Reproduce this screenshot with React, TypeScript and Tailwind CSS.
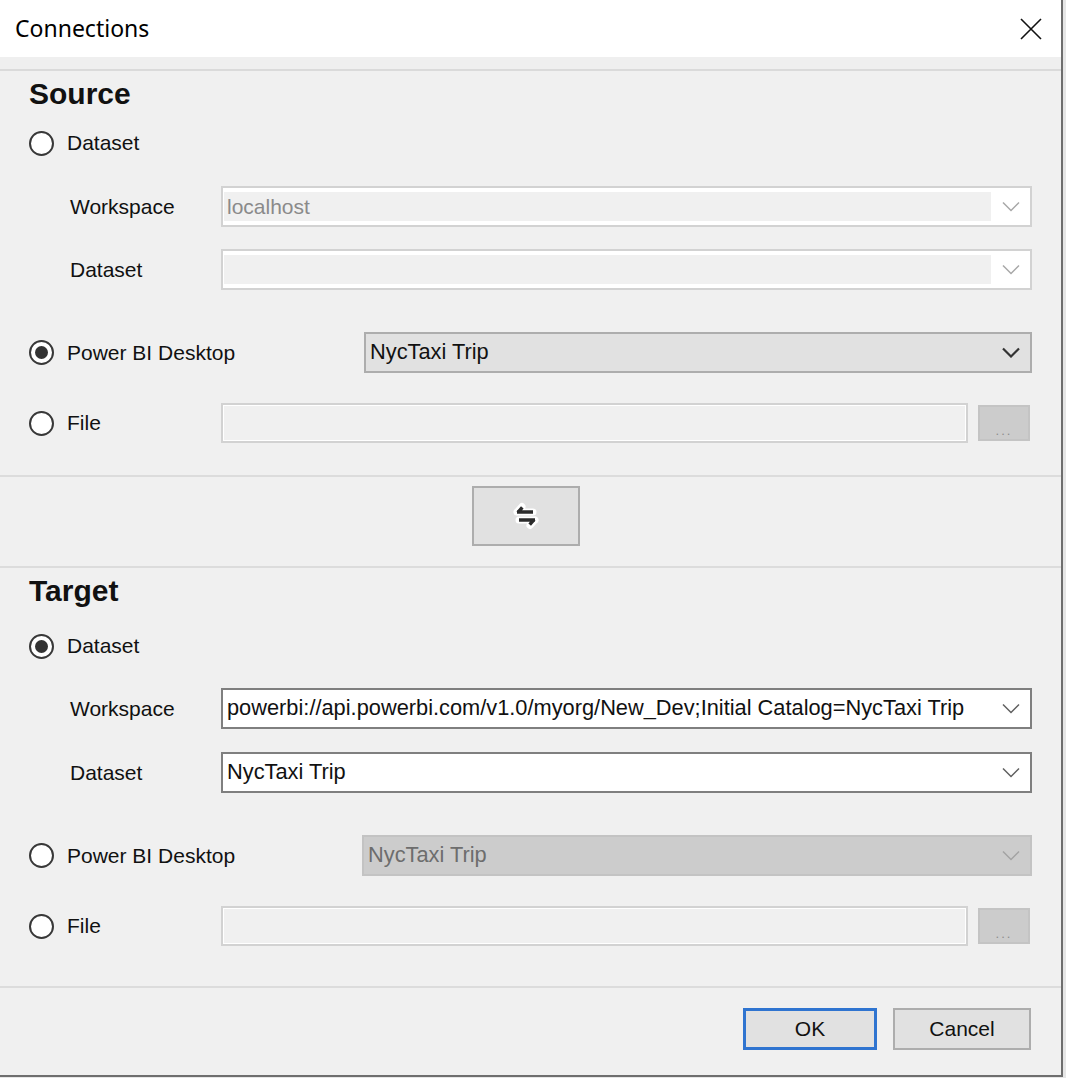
import React from "react";

const font = { fontFamily: '"Liberation Sans", Arial, sans-serif' };

const Radio = ({ checked }: { checked?: boolean }) => (
  <span className="flex h-[25px] w-[25px] shrink-0 items-center justify-center rounded-full border-2 border-[#383838] bg-white">
    {checked && <span className="h-[13px] w-[13px] rounded-full bg-[#333333]" />}
  </span>
);

const Chevron = ({ color, width = 1.5 }: { color: string; width?: number }) => (
  <svg width="18" height="11" viewBox="0 0 18 11" fill="none">
    <polyline points="1,1.5 9,9.5 17,1.5" stroke={color} strokeWidth={width} />
  </svg>
);

type ComboKind = "disabled" | "active" | "white" | "grayed";

const Combo = ({ kind, value, className }: { kind: ComboKind; value?: string; className?: string }) => {
  if (kind === "disabled") {
    return (
      <div className={`flex h-[41px] border-2 border-[#d2d2d2] bg-white py-[4px] pl-[1px] ${className ?? ""}`}>
        <div className="flex flex-1 items-center bg-[#f0f0f0] pl-[3px] text-[21px] text-[#8a8a8a]">{value}</div>
        <div className="flex w-[39px] items-center justify-center">
          <Chevron color="#a8a8a8" />
        </div>
      </div>
    );
  }
  const styles: Record<string, string> = {
    active: "border-2 border-[#adadad] bg-[#e1e1e1] text-[#111111]",
    white: "border-2 border-[#7f7f7f] bg-white text-[#111111]",
    grayed: "border-2 border-[#c3c3c3] bg-[#cccccc] text-[#6d6d6d]",
  };
  const chev: Record<string, [string, number]> = {
    active: ["#333333", 2.2],
    white: ["#606060", 1.5],
    grayed: ["#a3a3a3", 1.5],
  };
  return (
    <div className={`flex h-[41px] items-center ${styles[kind]} ${className ?? ""}`}>
      <div className="flex-1 truncate pl-[4px] text-[21.8px]">{value}</div>
      <div className="flex w-[39px] items-center justify-center">
        <Chevron color={chev[kind][0]} width={chev[kind][1]} />
      </div>
    </div>
  );
};

const FileRow = () => (
  <div className="flex items-center">
    <div className="flex w-[192px] items-center gap-[13px]">
      <Radio />
      <span className="text-[21px]">File</span>
    </div>
    <div className="h-[40px] w-[747px] border-2 border-[#d2d2d2] bg-[#f0f0f0] shadow-[inset_0_0_0_1px_#ffffff]" />
    <div className="ml-[10px] flex h-[36px] w-[52px] items-end justify-center border-2 border-[#c4c4c4] bg-[#cccccc] pb-[2px] text-[13px] leading-none tracking-[2px] text-[#8d8d8d]">
      ...
    </div>
  </div>
);

const SubRow = ({ label, children }: { label: string; children: React.ReactNode }) => (
  <div className="flex items-center">
    <span className="w-[192px] pl-[41px] text-[21px]">{label}</span>
    <div className="w-[811px]">{children}</div>
  </div>
);

export default function App() {
  return (
    <div className="h-[1078px] w-[1066px] bg-[#e6e6e6] text-[#111111]" style={font}>
      <div className="flex h-[1077px] w-[1063px] flex-col border-r-2 border-b-2 border-[#6e6e6e] bg-[#f0f0f0]">
        {/* title bar */}
        <div className="flex h-[57px] shrink-0 items-center justify-between bg-white pl-[15px] pr-[19px]">
          <span className="text-[23px] text-black" style={{ fontFamily: '"Noto Sans", sans-serif' }}>
            Connections
          </span>
          <svg width="22" height="22" viewBox="0 0 22 22">
            <path d="M1 1 L21 21 M21 1 L1 21" stroke="#111111" strokeWidth="1.6" />
          </svg>
        </div>
        <div className="h-[12px] shrink-0 bg-[#efefef]" />
        <div className="h-[2px] shrink-0 bg-[#dadada]" />

        {/* source */}
        <div className="flex flex-col pl-[29px]">
          <div className="flex h-[45px] items-center text-[30px] font-bold">Source</div>
          <div className="mt-[3px] flex h-[48px] items-center gap-[13px]">
            <Radio />
            <span className="text-[21px]">Dataset</span>
          </div>
          <div className="mt-[19px]">
            <SubRow label="Workspace">
              <Combo kind="disabled" value="localhost" />
            </SubRow>
          </div>
          <div className="mt-[22px]">
            <SubRow label="Dataset">
              <Combo kind="disabled" />
            </SubRow>
          </div>
          <div className="mt-[42px] flex items-center">
            <div className="flex w-[335px] items-center gap-[13px]">
              <Radio checked />
              <span className="text-[21px]">Power BI Desktop</span>
            </div>
            <Combo kind="active" value="NycTaxi Trip" className="w-[668px]" />
          </div>
          <div className="mt-[30px]">
            <FileRow />
          </div>
        </div>

        <div className="mt-[32px] h-[2px] shrink-0 bg-[#dcdcdc]" />
        <div className="flex pl-[472px] pt-[9px] pb-[20px]">
          <button className="flex h-[60px] w-[108px] items-center justify-center border-2 border-[#adadad] bg-[#e1e1e1]">
            <svg width="30" height="30" viewBox="0 0 30 30" fill="none">
              <g stroke="#ffffff" strokeWidth="7" strokeLinecap="round" strokeLinejoin="round">
                <path d="M6 11 H22 M6 11 L11 5.5" />
                <path d="M24 19 H8 M24 19 L19 24.5" />
              </g>
              <g stroke="#2b2b2b" strokeWidth="3.4" strokeLinejoin="round">
                <path d="M6 11 H22 M6.8 11.6 L11.3 6.3" />
                <path d="M24 19 H8 M23.2 18.4 L18.7 23.7" />
              </g>
            </svg>
          </button>
        </div>
        <div className="h-[2px] shrink-0 bg-[#dcdcdc]" />

        {/* target */}
        <div className="flex flex-col pl-[29px]">
          <div className="flex h-[45px] items-center text-[30px] font-bold">Target</div>
          <div className="mt-[9px] flex h-[48px] items-center gap-[13px]">
            <Radio checked />
            <span className="text-[21px]">Dataset</span>
          </div>
          <div className="mt-[18px]">
            <SubRow label="Workspace">
              <Combo kind="white" value="powerbi://api.powerbi.com/v1.0/myorg/New_Dev;Initial Catalog=NycTaxi Trip" />
            </SubRow>
          </div>
          <div className="mt-[23px]">
            <SubRow label="Dataset">
              <Combo kind="white" value="NycTaxi Trip" />
            </SubRow>
          </div>
          <div className="mt-[42px] flex items-center">
            <div className="flex w-[333px] items-center gap-[13px]">
              <Radio />
              <span className="text-[21px]">Power BI Desktop</span>
            </div>
            <Combo kind="grayed" value="NycTaxi Trip" className="w-[670px]" />
          </div>
          <div className="mt-[30px]">
            <FileRow />
          </div>
        </div>

        <div className="mt-[40px] h-[2px] shrink-0 bg-[#dcdcdc]" />
        <div className="flex justify-end gap-[16px] pr-[30px] pt-[20px]">
          <button className="h-[42px] w-[134px] border-[3px] border-[#2f74d0] bg-[#e1e1e1] text-[21px]">OK</button>
          <button className="h-[42px] w-[138px] border-2 border-[#adadad] bg-[#e1e1e1] text-[21px]">Cancel</button>
        </div>
      </div>
    </div>
  );
}
